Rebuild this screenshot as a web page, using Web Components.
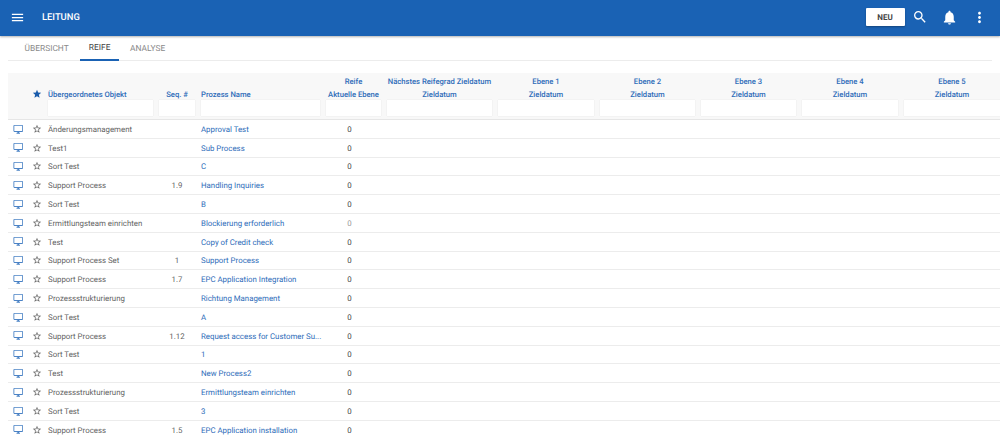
<!DOCTYPE html>
<html>
<head>
<meta charset="utf-8">
<style>
    html, body { margin: 0; height: 100%; overflow: hidden; background: #fff; }
    body { font-family: Roboto, "Liberation Sans", sans-serif; font-size: 7.85px; color: #5f5f5f; text-rendering: geometricPrecision; }
</style>
</head>
<body>
<app-bar title="LEITUNG"></app-bar>
<tab-strip></tab-strip>
<process-table></process-table>

<script>
const ICONS = {
    menu: '<path d="M3 18h18v-2H3v2zm0-5h18v-2H3v2zm0-7v2h18V6H3z"/>',
    search: '<path d="M15.5 14h-.79l-.28-.27A6.47 6.47 0 0 0 16 9.5 6.5 6.5 0 1 0 9.5 16c1.61 0 3.09-.59 4.23-1.57l.27.28v.79l5 4.99L20.49 19l-4.99-5zm-6 0C7.01 14 5 11.99 5 9.5S7.01 5 9.5 5 14 7.01 14 9.5 11.99 14 9.5 14z"/>',
    bell: '<path d="M12 22c1.1 0 2-.9 2-2h-4c0 1.1.9 2 2 2zm6-6v-5c0-3.07-1.63-5.64-4.5-6.32V4c0-.83-.67-1.5-1.5-1.5s-1.5.67-1.5 1.5v.68C7.64 5.36 6 7.92 6 11v5l-2 2v1h16v-1l-2-2z"/>',
    dots: '<path d="M12 8c1.1 0 2-.9 2-2s-.9-2-2-2-2 .9-2 2 .9 2 2 2zm0 2c-1.1 0-2 .9-2 2s.9 2 2 2 2-.9 2-2-.9-2-2-2zm0 6c-1.1 0-2 .9-2 2s.9 2 2 2 2-.9 2-2-.9-2-2-2z"/>',
    desktop: '<path d="M21 2H3c-1.1 0-2 .9-2 2v12c0 1.1.9 2 2 2h7v2H8v2h8v-2h-2v-2h7c1.1 0 2-.9 2-2V4c0-1.1-.9-2-2-2zm0 14H3V4h18v12z"/>',
    star: '<path d="M12 17.27L18.18 21l-1.64-7.03L22 9.24l-7.19-.61L12 2 9.19 8.63 2 9.24l5.46 4.73L5.82 21z"/>',
    starLine: '<path d="M22 9.24l-7.19-.62L12 2 9.19 8.63 2 9.24l5.46 4.73L5.82 21 12 17.27 18.18 21l-1.63-7.03L22 9.24zM12 15.4l-3.76 2.27 1-4.28-3.32-2.88 4.38-.38L12 6.1l1.71 4.04 4.38.38-3.32 2.88 1 4.28L12 15.4z"/>'
};

function icon(name, size) {
    return `<svg viewBox="0 0 24 24" width="${size}" height="${size}" fill="currentColor">${ICONS[name]}</svg>`;
}

const COLUMNS = "22px 15px 111px 42px 125px 61px 111px 102px 101px 101px 102px 102px";

class AppBar extends HTMLElement {
    connectedCallback() {
        this.attachShadow({ mode: "open" });
        this.shadowRoot.innerHTML = `
            <style>
                :host {
                    display: flex;
                    align-items: center;
                    height: 36px;
                    box-sizing: border-box;
                    padding-bottom: 2px;
                    background: #1a62b4;
                    color: #fff;
                    box-shadow: 0 1px 2px rgba(0, 0, 0, 0.3);
                    position: relative;
                }
                svg { display: block; }
                .menu { margin-left: 10px; width: 15px; display: flex; justify-content: center; }
                h1 { margin: 0 0 0 17px; font-size: 9.4px; font-weight: 500; flex: 1; }
                button {
                    border: 0;
                    width: 39px;
                    height: 18px;
                    background: #fff;
                    color: #444;
                    font: 700 8px Roboto, sans-serif;
                    text-rendering: geometricPrecision;
                    padding: 0;
                    border-radius: 1px;
                    box-shadow: 0 1px 2px rgba(0, 0, 0, 0.3);
                }
                .tools { display: flex; align-items: center; margin-left: 7px; margin-right: 12.5px; gap: 13px; }
            </style>
            <div class="menu">${icon("menu", 15)}</div>
            <h1>${this.getAttribute("title")}</h1>
            <button>NEU</button>
            <div class="tools">${icon("search", 16)}${icon("bell", 17)}${icon("dots", 17)}</div>
        `;
    }
}

class TabStrip extends HTMLElement {
    connectedCallback() {
        this.attachShadow({ mode: "open" });
        this.shadowRoot.innerHTML = `
            <style>
                :host {
                    display: flex;
                    height: 24px;
                    margin: 0 0 0 8px;
                    width: 984px;
                    border-bottom: 1px solid #ececec;
                    font-size: 8.4px;
                    color: #8a8a8a;
                }
                div { display: flex; align-items: center; padding: 0 11px; height: 25px; box-sizing: border-box; }
                .first { padding-left: 16.6px; padding-right: 11.4px; }
                .on { color: #444; border-bottom: 1px solid #1a62b4; box-shadow: inset 0 -1px 0 #1a62b4; width: 39px; padding: 0; justify-content: center; }
            </style>
            <div class="first">ÜBERSICHT</div>
            <div class="on">REIFE</div>
            <div>ANALYSE</div>
        `;
    }
}

class HeadCell extends HTMLElement {
    connectedCallback() {
        this.attachShadow({ mode: "open" });
        const top = this.getAttribute("top");
        this.shadowRoot.innerHTML = `
            <style>
                :host {
                    display: flex;
                    flex-direction: column;
                    justify-content: flex-end;
                    padding: 0 3px;
                    min-width: 0;
                    color: #2e6cb9;
                    font-weight: 500;
                    font-size: 7.65px;
                    text-align: center;
                    white-space: nowrap;
                }
                :host([left]) { text-align: left; }
                p { margin: 0; height: 12.5px; line-height: 14.5px; }
                i { display: block; height: 16px; background: #fff; box-shadow: 0 0 1px rgba(0, 0, 0, 0.12); margin-bottom: 3px; }
            </style>
            ${top ? `<p>${top}</p>` : ""}
            <p><slot></slot></p>
            <i></i>
        `;
    }
}

class ProcessRow extends HTMLElement {
    connectedCallback() {
        this.attachShadow({ mode: "open" });
        const g = (n) => this.getAttribute(n) || "";
        this.shadowRoot.innerHTML = `
            <style>
                :host {
                    display: grid;
                    grid-template-columns: ${COLUMNS};
                    align-items: center;
                    height: 18.8px;
                    box-sizing: border-box;
                    border-bottom: 1px solid #ececec;
                    margin-left: 8px;
                }
                span { padding: 1px 3px 0; white-space: nowrap; }
                .mon { color: #4a82c5; padding: 0 0 0 4.5px; display: flex; }
                .fav { color: #666; padding: 0 0 0 2px; display: flex; }
                .seq { text-align: center; }
                .name { color: #2e6cb9; }
                .num { text-align: center; color: #444; padding: 1px 11px 0 3px; }
                .num.dim { color: #999; }
            </style>
            <span class="mon">${icon("desktop", 10.5)}</span>
            <span class="fav">${icon("starLine", 10)}</span>
            <span>${g("parent")}</span>
            <span class="seq">${g("seq")}</span>
            <span class="name">${g("name")}</span>
            <span class="num ${this.hasAttribute("dim") ? "dim" : ""}">0</span>
        `;
    }
}

class ProcessTable extends HTMLElement {
    connectedCallback() {
        this.attachShadow({ mode: "open" });
        const rows = [
            ["Änderungsmanagement", "", "Approval Test"],
            ["Test1", "", "Sub Process"],
            ["Sort Test", "", "C"],
            ["Support Process", "1.9", "Handling Inquiries"],
            ["Sort Test", "", "B"],
            ["Ermittlungsteam einrichten", "", "Blockierung erforderlich", true],
            ["Test", "", "Copy of Credit check"],
            ["Support Process Set", "1", "Support Process"],
            ["Support Process", "1.7", "EPC Application Integration"],
            ["Prozessstrukturierung", "", "Richtung Management"],
            ["Sort Test", "", "A"],
            ["Support Process", "1.12", "Request access for Customer Su..."],
            ["Sort Test", "", "1"],
            ["Test", "", "New Process2"],
            ["Prozessstrukturierung", "", "Ermittlungsteam einrichten"],
            ["Sort Test", "", "3"],
            ["Support Process", "1.5", "EPC Application installation"]
        ];
        this.shadowRoot.innerHTML = `
            <style>
                :host { display: block; margin-top: 12px; width: 1000px; overflow: hidden; }
                .head {
                    display: grid;
                    grid-template-columns: ${COLUMNS};
                    margin-left: 8px;
                    height: 46px;
                    background: #f8f8f8;
                    border-bottom: 1px solid #e6e6e6;
                }
                .star { grid-column: 2; color: #1a5cab; display: flex; align-self: end; margin: 0 0 20px 2px; }
            </style>
            <div class="head">
                <span class="star">${icon("star", 10)}</span>
                <head-cell left>Übergeordnetes Objekt</head-cell>
                <head-cell>Seq. #</head-cell>
                <head-cell left>Prozess Name</head-cell>
                <head-cell top="Reife">Aktuelle Ebene</head-cell>
                <head-cell top="Nächstes Reifegrad Zieldatum">Zieldatum</head-cell>
                <head-cell top="Ebene 1">Zieldatum</head-cell>
                <head-cell top="Ebene 2">Zieldatum</head-cell>
                <head-cell top="Ebene 3">Zieldatum</head-cell>
                <head-cell top="Ebene 4">Zieldatum</head-cell>
                <head-cell top="Ebene 5">Zieldatum</head-cell>
            </div>
            <div id="body"></div>
        `;
        const body = this.shadowRoot.getElementById("body");
        for (const [parent, seq, name, dim] of rows) {
            const row = document.createElement("process-row");
            row.setAttribute("parent", parent);
            row.setAttribute("seq", seq);
            row.setAttribute("name", name);
            if (dim) row.setAttribute("dim", "");
            body.appendChild(row);
        }
    }
}

customElements.define("app-bar", AppBar);
customElements.define("tab-strip", TabStrip);
customElements.define("head-cell", HeadCell);
customElements.define("process-row", ProcessRow);
customElements.define("process-table", ProcessTable);
</script>
</body>
</html>
